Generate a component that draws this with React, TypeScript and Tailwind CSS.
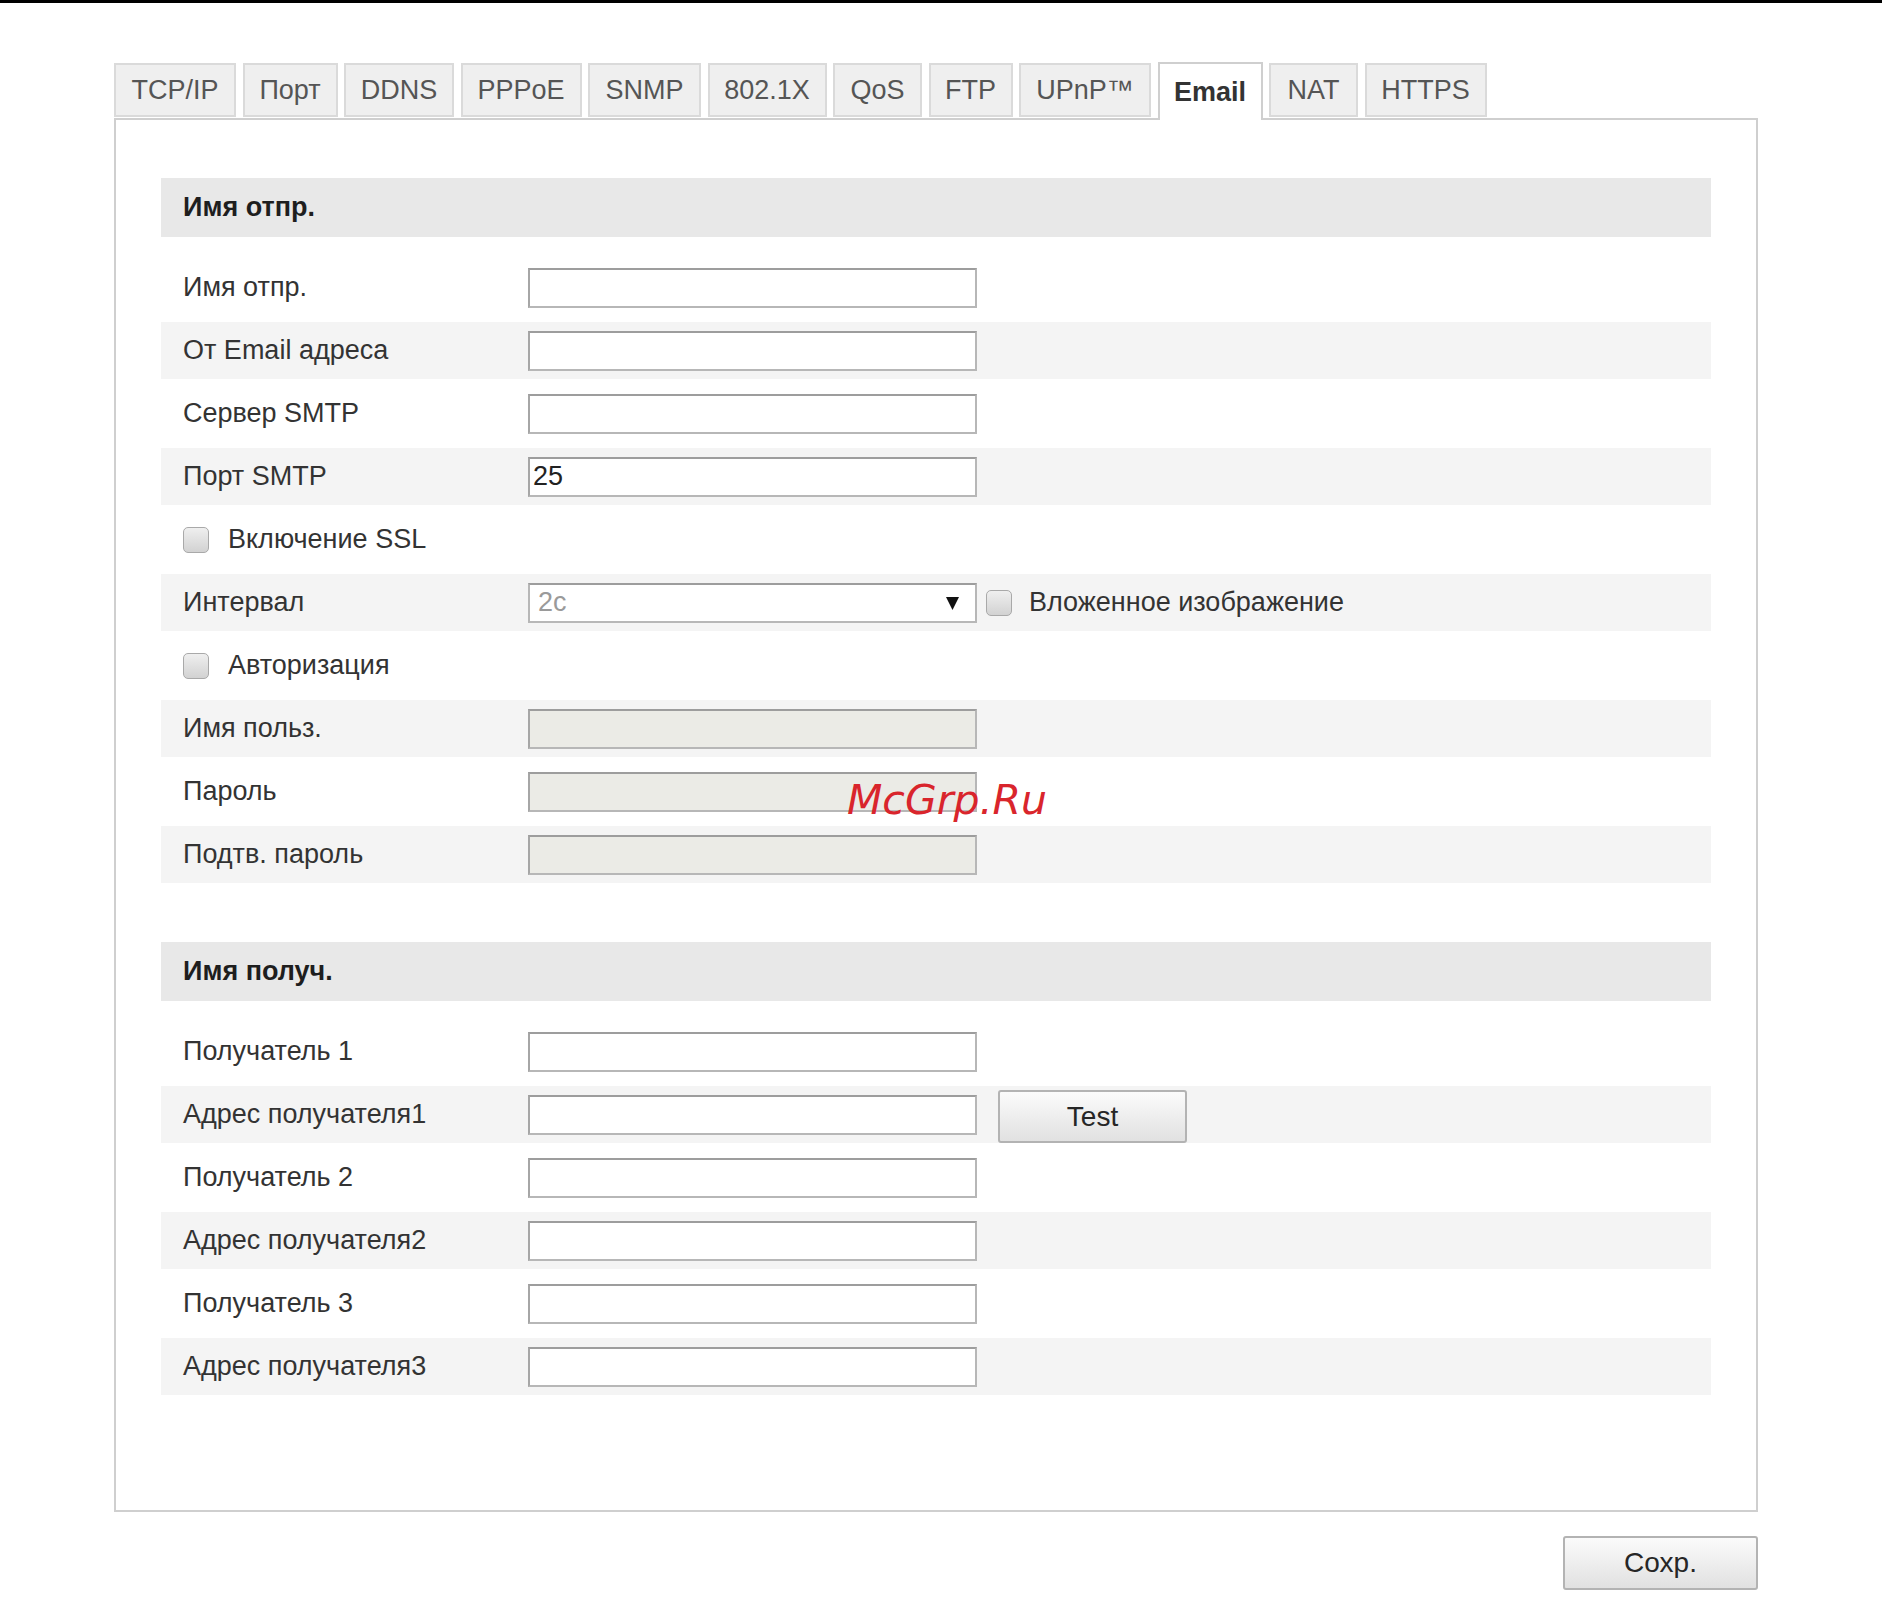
import React from 'react';

// Tabs across the top of the network settings page
const TABS = [
  { label: 'TCP/IP', w: 122 },
  { label: 'Порт', w: 95 },
  { label: 'DDNS', w: 110 },
  { label: 'PPPoE', w: 121 },
  { label: 'SNMP', w: 113 },
  { label: '802.1X', w: 119 },
  { label: 'QoS', w: 89 },
  { label: 'FTP', w: 84 },
  { label: 'UPnP™', w: 132 },
  { label: 'Email', w: 105, active: true },
  { label: 'NAT', w: 89 },
  { label: 'HTTPS', w: 122 },
];

type Row =
  | { kind: 'input'; label: string; value?: string; disabled?: boolean; test?: boolean }
  | { kind: 'check'; label: string }
  | { kind: 'select'; label: string; value: string; extra: string };

const SENDER: Row[] = [
  { kind: 'input', label: 'Имя отпр.' },
  { kind: 'input', label: 'От Email адреса' },
  { kind: 'input', label: 'Сервер SMTP' },
  { kind: 'input', label: 'Порт SMTP', value: '25' },
  { kind: 'check', label: 'Включение SSL' },
  { kind: 'select', label: 'Интервал', value: '2c', extra: 'Вложенное изображение' },
  { kind: 'check', label: 'Авторизация' },
  { kind: 'input', label: 'Имя польз.', disabled: true },
  { kind: 'input', label: 'Пароль', disabled: true },
  { kind: 'input', label: 'Подтв. пароль', disabled: true },
];

const RECEIVER: Row[] = [
  { kind: 'input', label: 'Получатель 1' },
  { kind: 'input', label: 'Адрес получателя1', test: true },
  { kind: 'input', label: 'Получатель 2' },
  { kind: 'input', label: 'Адрес получателя2' },
  { kind: 'input', label: 'Получатель 3' },
  { kind: 'input', label: 'Адрес получателя3' },
];

const Checkbox = () => (
  <span className="w-[26px] h-[26px] shrink-0 rounded-[5px] border border-[#a9a9a9] bg-linear-to-b from-[#efefef] to-[#d2d2d2]" />
);

const TextBox = ({ value, disabled }: { value?: string; disabled?: boolean }) => (
  <input
    readOnly
    defaultValue={value ?? ''}
    className={`w-[449px] h-[40px] shrink-0 border-2 border-[#b7b7b7] border-t-[#9d9d9d] border-l-[#a6a6a6] px-[3px] text-[27px] text-[#222] outline-none ${
      disabled ? 'bg-[#ebebe6]' : 'bg-white'
    }`}
  />
);

const GrayButton = ({ label, className }: { label: string; className: string }) => (
  <button
    className={`rounded-[3px] border-2 border-[#b3b3b3] bg-linear-to-b from-[#fbfbfb] to-[#e1e1e1] text-[28px] text-[#262626] ${className}`}
  >
    {label}
  </button>
);

const FormRow = ({ row, striped }: { row: Row; striped: boolean }) => (
  <div className={`h-[57px] flex items-center ${striped ? 'bg-[#f4f4f4]' : 'bg-white'}`}>
    {row.kind === 'check' ? (
      <div className="pl-[22px] flex items-center gap-[19px]">
        <Checkbox />
        <span>{row.label}</span>
      </div>
    ) : (
      <>
        <div className="w-[367px] shrink-0 pl-[22px]">{row.label}</div>
        {row.kind === 'select' ? (
          <>
            <div className="w-[449px] h-[40px] shrink-0 border-2 border-[#b7b7b7] border-t-[#9d9d9d] bg-white pl-[8px] pr-[16px] flex items-center justify-between">
              <span className="text-[#9a9a9a]">{row.value}</span>
              <svg width="13" height="14" viewBox="0 0 13 14">
                <polygon points="0,1 13,1 6.5,14" fill="#111" />
              </svg>
            </div>
            <div className="ml-[9px] flex items-center gap-[17px]">
              <Checkbox />
              <span>{row.extra}</span>
            </div>
          </>
        ) : (
          <>
            <TextBox value={row.value} disabled={row.disabled} />
            {row.test && <GrayButton label="Test" className="ml-[21px] mt-[4px] w-[189px] h-[53px]" />}
          </>
        )}
      </>
    )}
  </div>
);

const Section = ({ title, rows, className }: { title: string; rows: Row[]; className?: string }) => (
  <div className={className}>
    <div className="h-[59px] flex items-center pl-[22px] bg-[#e8e8e8] font-bold text-[#1e1e1e]">{title}</div>
    <div className="mt-[22px] flex flex-col gap-[6px]">
      {rows.map((row, i) => (
        <FormRow key={row.label} row={row} striped={i % 2 === 1} />
      ))}
    </div>
  </div>
);

export default function App() {
  return (
    <div className="relative w-full min-h-[1597px] bg-white border-t-[3px] border-black font-['Liberation_Sans',Arial,sans-serif] text-[27px] text-[#333]">
      <div className="ml-[114px] w-[1644px] pt-[59px]">
        <div className="flex items-end gap-[6.5px]">
          {TABS.map((tab) =>
            tab.active ? (
              <div
                key={tab.label}
                style={{ width: tab.w }}
                className="relative z-10 -mb-[2px] h-[58px] flex items-center justify-center border-2 border-b-0 border-[#cfcfcf] bg-white font-bold text-[#333]"
              >
                {tab.label}
              </div>
            ) : (
              <div
                key={tab.label}
                style={{ width: tab.w }}
                className="mb-[1px] h-[54px] flex items-center justify-center border-2 border-[#dadada] bg-[#efefef] text-[#555]"
              >
                {tab.label}
              </div>
            )
          )}
        </div>
        <div className="h-[1394px] border-2 border-[#cfcfcf] pt-[58px] px-[45px]">
          <Section title="Имя отпр." rows={SENDER} />
          <Section title="Имя получ." rows={RECEIVER} className="mt-[59px]" />
        </div>
        <div className="flex justify-end mt-[24px]">
          <GrayButton label="Сохр." className="w-[195px] h-[54px]" />
        </div>
      </div>
      <span className="absolute left-[847px] top-[777px] leading-none italic text-[41px] text-[#d9252c] font-['DejaVu_Sans',sans-serif] pointer-events-none">
        McGrp.Ru
      </span>
    </div>
  );
}
